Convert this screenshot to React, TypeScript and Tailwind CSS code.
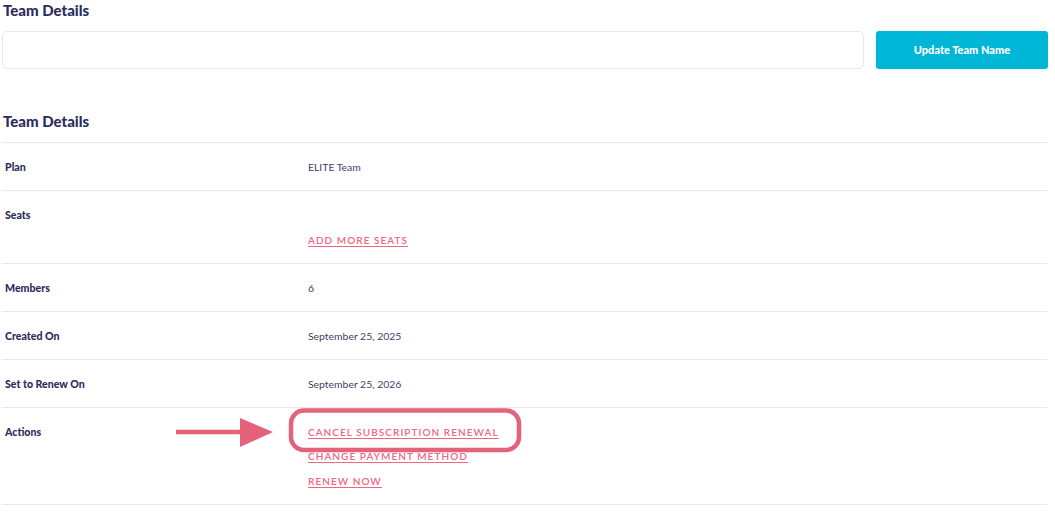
import React from "react";

const font = { fontFamily: "Lato, 'Open Sans', sans-serif" };

function Row({ label, children }: { label: string; children: React.ReactNode }) {
  return (
    <div className="flex border-b border-[#e9e9f3] pt-[17px] pb-[16px]">
      <div className="w-[306px] shrink-0 pl-[3px] text-[10.6px] leading-[14px] font-black text-[#2c2d5e]">{label}</div>
      <div className="flex flex-col gap-[10.5px] text-[10.4px] leading-[14px] text-[#3f4066]">{children}</div>
    </div>
  );
}

function Link({ children }: { children: React.ReactNode }) {
  return (
    <a className="text-[10px] leading-[14px] font-semibold tracking-[1.05px] uppercase underline underline-offset-[2px] text-[#f2667f] cursor-pointer">
      {children}
    </a>
  );
}

export default function App() {
  return (
    <div className="bg-white w-[1055px] h-[514px] overflow-hidden" style={font}>
      <div className="pl-[2px] pr-[7px]">
        <h2 className="pl-[1px] pt-0 text-[15px] leading-[20px] font-black text-[#2c2d5e]">Team Details</h2>
        <div className="mt-[11px] flex gap-[12px]">
          <input className="h-[38px] flex-1 rounded-[5px] border border-[#e6e6f0] bg-white outline-none" />
          <button className="h-[38px] w-[172px] rounded-[3px] bg-[#00b6d6] text-[11px] font-black text-white">
            Update Team Name
          </button>
        </div>
        <h2 className="mt-[42px] pl-[1px] text-[15px] leading-[20px] font-black text-[#2c2d5e]">Team Details</h2>
        <div className="mt-[11px] border-t border-[#e9e9f3]">
          <Row label="Plan">
            <span>ELITE Team</span>
          </Row>
          <Row label="Seats">
            <span className="h-[14px]"></span>
            <Link>Add More Seats</Link>
          </Row>
          <Row label="Members">
            <span>6</span>
          </Row>
          <Row label="Created On">
            <span>September 25, 2025</span>
          </Row>
          <Row label="Set to Renew On">
            <span>September 25, 2026</span>
          </Row>
          <div className="relative">
            <Row label="Actions">
              <Link>Cancel Subscription Renewal</Link>
              <Link>Change Payment Method</Link>
              <Link>Renew Now</Link>
            </Row>
            <svg className="absolute left-0 top-0 pointer-events-none" width="540" height="60" viewBox="0 0 540 60">
              <line x1="174" y1="24" x2="244" y2="24" stroke="#e4627a" strokeWidth="4.5" />
              <polygon points="238,10 271,24 238,39" fill="#e4627a" />
              <rect x="289" y="2.5" width="228" height="39.5" rx="13" ry="13" fill="none" stroke="#e4627a" strokeWidth="4.5" />
            </svg>
          </div>
        </div>
      </div>
    </div>
  );
}
